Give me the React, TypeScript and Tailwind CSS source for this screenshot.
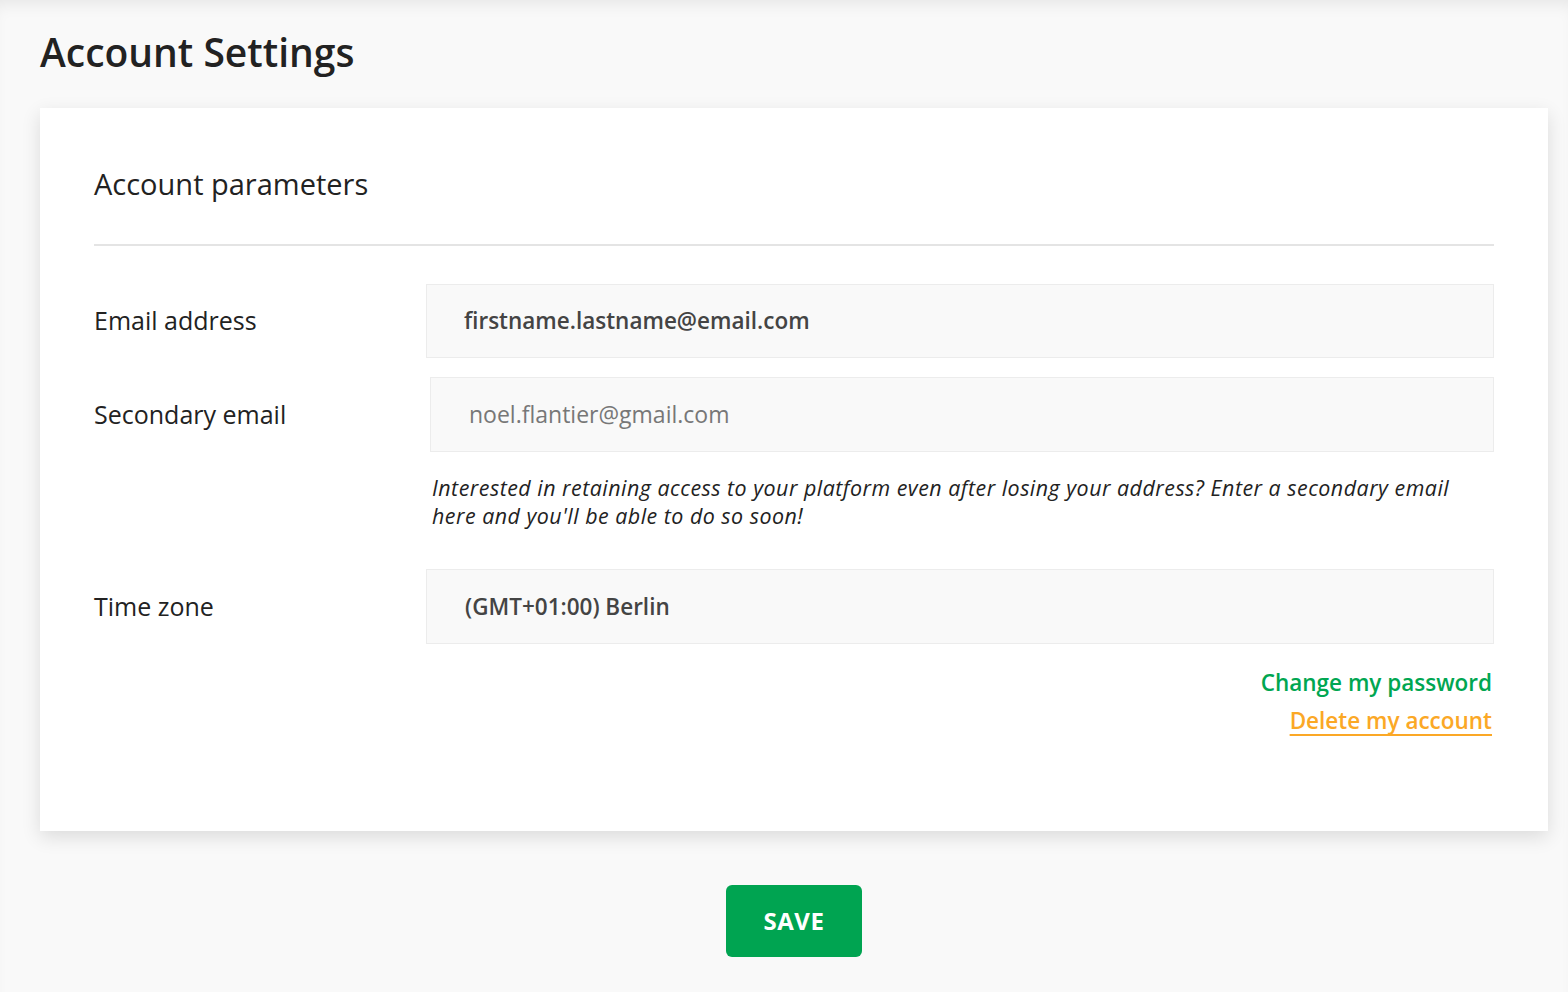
export default function App() {
  return (
    <div className="min-h-[992px] bg-[#f9f9f9] shadow-[inset_0_12px_16px_-8px_rgba(0,0,0,0.08)] pb-[36px] font-['Open_Sans',sans-serif] text-[#222]">
      <h1 className="pl-[40px] pt-[28px] text-[39px] leading-[48px] font-semibold text-[#222]">
        Account Settings
      </h1>

      <div className="ml-[40px] mr-[20px] mt-[32px] bg-white px-[54px] pt-[60px] pb-[95px] shadow-[0_6px_18px_rgba(0,0,0,0.12)]">
        <h2 className="text-[29px] leading-[32px] font-medium text-[#222]">Account parameters</h2>
        <div className="mt-[44px] h-[2px] bg-[#e4e4e4]" />

        <div className="mt-[38px] flex items-center">
          <div className="w-[332px] shrink-0 text-[25px]">Email address</div>
          <div className="flex h-[74px] flex-1 items-center border border-[#ececec] bg-[#f9f9f9] pl-[37px] text-[22.5px] font-semibold text-[#444]">
            firstname.lastname@email.com
          </div>
        </div>

        <div className="mt-[19px] flex items-center">
          <div className="w-[336px] shrink-0 text-[25px]">Secondary email</div>
          <div className="flex h-[75px] flex-1 items-center border border-[#ececec] bg-[#f9f9f9] pl-[38px] text-[23px] font-medium text-[#777]">
            noel.flantier@gmail.com
          </div>
        </div>
        <p className="ml-[338px] mt-[22px] pr-[10px] text-[21.4px] leading-[28px] italic tracking-[0.5px] text-[#222]">
          Interested in retaining access to your platform even after losing your address? Enter a secondary email here and you'll be able to do so soon!
        </p>

        <div className="mt-[39px] flex items-center">
          <div className="w-[332px] shrink-0 text-[25px]">Time zone</div>
          <div className="flex h-[75px] flex-1 items-center border border-[#ececec] bg-[#f9f9f9] pl-[38px] text-[22.5px] font-semibold text-[#444]">
            (GMT+01:00) Berlin
          </div>
        </div>

        <div className="mt-[24px] flex flex-col items-end pr-[2px] text-[22.5px] font-semibold leading-[30px]">
          <a className="text-[#00a651]">Change my password</a>
          <a className="mt-[8px] text-[#fba826] underline underline-offset-[5px]">Delete my account</a>
        </div>
      </div>

      <div className="ml-[40px] mr-[20px] mt-[54px] flex justify-center">
        <button className="h-[72px] w-[136px] rounded-[6px] bg-[#00a451] text-[24px] font-bold tracking-[0.5px] text-white">
          SAVE
        </button>
      </div>
    </div>
  );
}
